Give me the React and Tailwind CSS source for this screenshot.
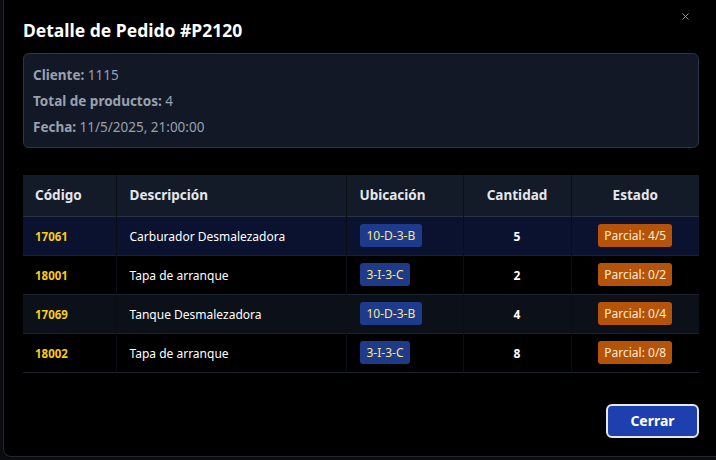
import { X } from 'lucide-react'

const items = [
  { code: '17061', desc: 'Carburador Desmalezadora', loc: '10-D-3-B', qty: 5, done: 4, bg: 'bg-[#0a1230]' },
  { code: '18001', desc: 'Tapa de arranque', loc: '3-I-3-C', qty: 2, done: 0, bg: 'bg-black' },
  { code: '17069', desc: 'Tanque Desmalezadora', loc: '10-D-3-B', qty: 4, done: 0, bg: 'bg-[#0c1018]' },
  { code: '18002', desc: 'Tapa de arranque', loc: '3-I-3-C', qty: 8, done: 0, bg: 'bg-black' },
]

export default function App() {
  return (
    <div className="w-[716px] h-[460px] overflow-hidden flex pl-[3px] pb-[3px] bg-[#0a0c10] font-['Noto_Sans',sans-serif]">
      <div className="relative flex-1 flex flex-col bg-black border-l border-b border-[#1f2630] rounded-bl-lg pl-[19px] pr-[17px] pt-[17px]">
        {/* close */}
        <button className="absolute right-[25px] top-[11px] text-gray-400">
          <X size={11} strokeWidth={2} />
        </button>

        <h2 className="text-[17.5px] leading-[26px] font-bold text-white">Detalle de Pedido #P2120</h2>

        {/* info */}
        <div className="mt-[10px] bg-[#121826] border border-[#2c3544] rounded-md px-[9px] pt-[11px] pb-[10px] space-y-1.5 text-[13.5px] leading-5 text-gray-400">
          <p><span className="font-bold">Cliente:</span> 1115</p>
          <p><span className="font-bold">Total de productos:</span> 4</p>
          <p><span className="font-bold">Fecha:</span> 11/5/2025, 21:00:00</p>
        </div>

        {/* table */}
        <table className="mt-[27px] w-full border-collapse text-[12px]">
          <thead>
            <tr className="bg-[#131a28] border-b border-[#2a323e] text-gray-200 font-bold text-[13.5px]">
              <th className="w-[93px] h-[41px] px-3 text-left border-r border-[#0b0e15]">Código</th>
              <th className="w-[230px] px-[13px] text-left border-r border-[#0b0e15]">Descripción</th>
              <th className="w-[117px] px-[13px] text-left border-r border-[#0b0e15]">Ubicación</th>
              <th className="w-[108px] text-center border-r border-[#0b0e15]">Cantidad</th>
              <th className="text-center">Estado</th>
            </tr>
          </thead>
          <tbody>
            {items.map((it) => (
              <tr key={it.code} className={`${it.bg} border-b border-[#1c222c]`}>
                <td className="h-[39px] pt-0.5 px-3 font-bold text-[11.5px] text-[#facc15] border-r border-[#0b0e15]">{it.code}</td>
                <td className="pt-0.5 px-[13px] text-white border-r border-[#0b0e15]">{it.desc}</td>
                <td className="px-[13px] border-r border-[#0b0e15]">
                  <span className="inline-block bg-[#1e3a8a] text-[#fde68a] rounded-[3px] px-[7px] pt-px leading-[22px]">{it.loc}</span>
                </td>
                <td className="pt-0.5 text-center font-bold text-white border-r border-[#0b0e15]">{it.qty}</td>
                <td className="text-center">
                  <span className="inline-block bg-[#b45309] text-[#ffedd5] rounded-[3px] px-[6px] pt-px leading-[22px]">Parcial: {it.done}/{it.qty}</span>
                </td>
              </tr>
            ))}
          </tbody>
        </table>

        <div className="mt-auto mb-[18px] flex justify-end">
          <button className="w-[93px] h-[34px] rounded-md bg-[#1e40af] border-2 border-gray-200 text-white font-bold text-sm">Cerrar</button>
        </div>
      </div>
    </div>
  )
}
